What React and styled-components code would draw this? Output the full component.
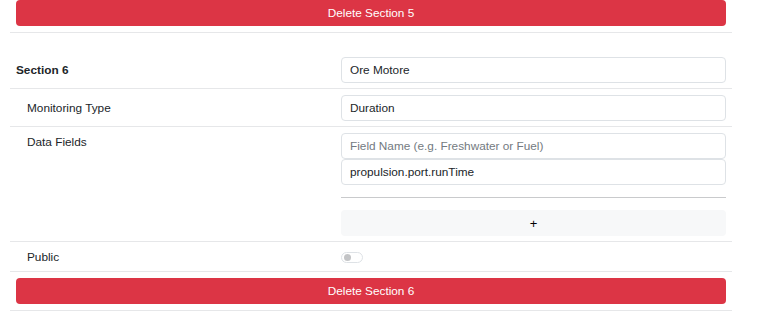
import React from 'react';
import styled, { createGlobalStyle } from 'styled-components';

const GlobalStyle = createGlobalStyle`
  body {
    margin: 0;
    background: #fff;
    font-family: "Liberation Sans", Arial, sans-serif;
    font-size: 11.8px;
    color: #212529;
  }
`;

const Table = styled.div`
  width: 722px;
  margin: -6px 0 0 10px;
`;

const Row = styled.div`
  display: grid;
  grid-template-columns: 325px 1fr;
  border-bottom: 1px solid #e6e7e9;
  padding-top: ${props => (props.spaced ? '18px' : '0')};
`;

const Cell = styled.div`
  padding: 6px 6px 5px;
  line-height: 18px;
  padding-left: ${props => (props.indent ? '17px' : '6px')};
  font-weight: ${props => (props.bold ? 700 : 400)};
  display: flex;
  flex-direction: column;
  justify-content: ${props => (props.center ? 'center' : 'flex-start')};
`;

const FullCell = styled.div`
  grid-column: 1 / span 2;
  padding: 6px;
`;

const DangerButton = styled.button`
  width: 100%;
  height: 26px;
  border: none;
  border-radius: 4px;
  background: #dc3545;
  color: #fff;
  font-family: inherit;
  font-size: 11.8px;
`;

const Input = styled.input`
  box-sizing: border-box;
  width: 100%;
  height: 26px;
  border: 1px solid #dee2e6;
  border-radius: 4px;
  padding: 0 8px;
  font-family: inherit;
  font-size: 11.8px;
  color: #212529;
  background: #fff;

  &::placeholder {
    color: #737a81;
  }
`;

const Divider = styled.hr`
  border: none;
  border-top: 1px solid #c9cacc;
  margin: 12px 0;
`;

const PlusButton = styled.button`
  width: 100%;
  height: 26px;
  border: none;
  border-radius: 4px;
  background: #f7f8f9;
  color: #000;
  font-family: inherit;
  font-size: 13px;
`;

const Switch = styled.span`
  box-sizing: border-box;
  display: flex;
  align-items: center;
  width: 22px;
  height: 11px;
  border: 1px solid #dee2e6;
  border-radius: 6px;
  padding-left: 2px;

  &::before {
    content: '';
    width: 7px;
    height: 7px;
    border-radius: 50%;
    background: #c3c4c6;
  }
`;

export default function App() {
  return (
    <>
      <GlobalStyle />
      <Table>
        <Row>
          <FullCell>
            <DangerButton>Delete Section 5</DangerButton>
          </FullCell>
        </Row>
        <Row spaced>
          <Cell bold center>Section 6</Cell>
          <Cell>
            <Input defaultValue="Ore Motore" />
          </Cell>
        </Row>
        <Row>
          <Cell indent center>Monitoring Type</Cell>
          <Cell>
            <Input defaultValue="Duration" />
          </Cell>
        </Row>
        <Row>
          <Cell indent>Data Fields</Cell>
          <Cell>
            <Input placeholder="Field Name (e.g. Freshwater or Fuel)" />
            <Input defaultValue="propulsion.port.runTime" />
            <Divider />
            <PlusButton>+</PlusButton>
          </Cell>
        </Row>
        <Row>
          <Cell indent>Public</Cell>
          <Cell center>
            <Switch />
          </Cell>
        </Row>
        <Row>
          <FullCell>
            <DangerButton>Delete Section 6</DangerButton>
          </FullCell>
        </Row>
      </Table>
    </>
  );
}
